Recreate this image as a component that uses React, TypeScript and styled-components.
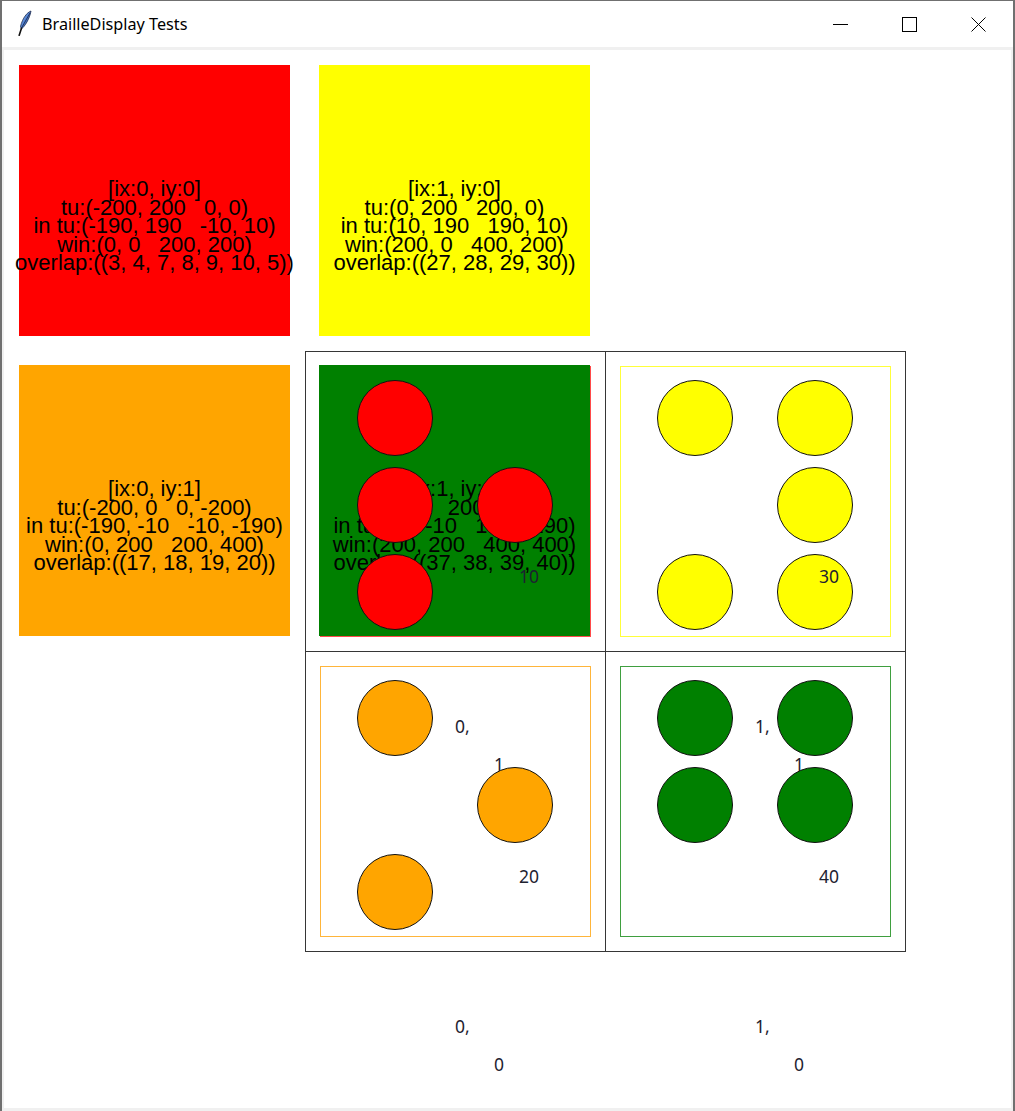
import React from "react";
import styled, { createGlobalStyle } from "styled-components";

const GlobalStyle = createGlobalStyle`
  html, body {
    margin: 0;
    padding: 0;
    background: #ffffff;
  }
  body {
    width: 1015px;
    height: 1111px;
    overflow: hidden;
  }
`;

type InfoPanel = {
  fill: string;
  lines: string[];
};

type BrailleCell = {
  frame: string;
  fill: string;
  dots: number[];
  coords?: [string, string];
  index: string;
  panel?: InfoPanel;
};

const redInfo: InfoPanel = {
  fill: "#ff0000",
  lines: [
    "[ix:0, iy:0]",
    "tu:(-200, 200   0, 0)",
    "in tu:(-190, 190   -10, 10)",
    "win:(0, 0   200, 200)",
    "overlap:((3, 4, 7, 8, 9, 10, 5))",
  ],
};

const yellowInfo: InfoPanel = {
  fill: "#ffff00",
  lines: [
    "[ix:1, iy:0]",
    "tu:(0, 200   200, 0)",
    "in tu:(10, 190   190, 10)",
    "win:(200, 0   400, 200)",
    "overlap:((27, 28, 29, 30))",
  ],
};

const orangeInfo: InfoPanel = {
  fill: "#ffa500",
  lines: [
    "[ix:0, iy:1]",
    "tu:(-200, 0   0, -200)",
    "in tu:(-190, -10   -10, -190)",
    "win:(0, 200   200, 400)",
    "overlap:((17, 18, 19, 20))",
  ],
};

const greenInfo: InfoPanel = {
  fill: "#008000",
  lines: [
    "[ix:1, iy:1]",
    "tu:(0, 0   200, -200)",
    "in tu:(10, -10   190, -190)",
    "win:(200, 200   400, 400)",
    "overlap:((37, 38, 39, 40))",
  ],
};

// dots are listed row by row: (1,4) (2,5) (3,6)
const cells: BrailleCell[] = [
  {
    frame: "#ff4a4a",
    fill: "#ff0000",
    dots: [1, 0, 1, 1, 1, 0],
    index: "10",
    panel: greenInfo,
  },
  {
    frame: "#ffff3a",
    fill: "#ffff00",
    dots: [1, 1, 0, 1, 1, 1],
    index: "30",
  },
  {
    frame: "#ffb53a",
    fill: "#ffa500",
    dots: [1, 0, 0, 1, 1, 0],
    coords: ["0,", "1"],
    index: "20",
  },
  {
    frame: "#3f9f3f",
    fill: "#008000",
    dots: [1, 1, 1, 1, 0, 0],
    coords: ["1,", "1"],
    index: "40",
  },
];

const strayCoords: [string, string][] = [
  ["0,", "0"],
  ["1,", "0"],
];

const Info: React.FC<{ info: InfoPanel; $overlay?: boolean }> = ({ info, $overlay }) => (
  <Panel $fill={info.fill} $overlay={$overlay}>
    <InfoText>
      {info.lines.map((line) => (
        <div key={line}>{line}</div>
      ))}
    </InfoText>
  </Panel>
);

const App: React.FC = () => {
  return (
    <>
      <GlobalStyle />
      <Window>
        <TitleBar>
          <AppIcon width="16" height="26" viewBox="0 0 16 26">
            <defs>
              <linearGradient id="feather" x1="0" y1="0" x2="1" y2="1">
                <stop offset="0" stopColor="#a9c8f2" />
                <stop offset="0.5" stopColor="#4d7fd0" />
                <stop offset="1" stopColor="#23438a" />
              </linearGradient>
            </defs>
            <path
              d="M15 1 C 11 2.5 6.5 8 4.5 16.5 L 5.5 19 C 9 16 13.5 9 15 1 Z"
              fill="url(#feather)"
              stroke="#1d2b4f"
              strokeWidth="0.8"
            />
            <path d="M14 3 L 5.2 18.6" stroke="#0d1633" strokeWidth="0.7" />
            <path
              d="M5.4 18.4 L 3.2 25.3"
              stroke="#111111"
              strokeWidth="1.6"
              strokeLinecap="round"
            />
          </AppIcon>
          <Title>BrailleDisplay Tests</Title>
          <Controls>
            <ControlButton>
              <svg width="15" height="15" viewBox="0 0 15 15">
                <path d="M0 7.5 H15" stroke="#000" strokeWidth="1" />
              </svg>
            </ControlButton>
            <ControlButton>
              <svg width="15" height="15" viewBox="0 0 15 15">
                <rect x="0.5" y="0.5" width="14" height="14" fill="none" stroke="#000" />
              </svg>
            </ControlButton>
            <ControlButton>
              <svg width="15" height="15" viewBox="0 0 15 15">
                <path d="M0.5 0.5 L14.5 14.5 M14.5 0.5 L0.5 14.5" stroke="#000" strokeWidth="1" />
              </svg>
            </ControlButton>
          </Controls>
        </TitleBar>
        <Client>
          <Canvas>
            <TopRow>
              <Info info={redInfo} />
              <Info info={yellowInfo} />
            </TopRow>

            <MiddleRow>
              <SideSlot>
                <Info info={orangeInfo} />
              </SideSlot>
              <Grid>
                {cells.map((cell) => (
                  <Cell key={cell.index}>
                    <Frame $color={cell.frame} />
                    {cell.panel && <Info info={cell.panel} $overlay />}
                    {cell.coords && (
                      <>
                        <CoordX>{cell.coords[0]}</CoordX>
                        <CoordY>{cell.coords[1]}</CoordY>
                      </>
                    )}
                    <DotGrid>
                      {cell.dots.map((on, i) => (
                        <Dot key={i} $fill={cell.fill} $on={on === 1} />
                      ))}
                    </DotGrid>
                    <IndexTag>{cell.index}</IndexTag>
                  </Cell>
                ))}
              </Grid>
            </MiddleRow>

            <StrayRow>
              {strayCoords.map(([x, y]) => (
                <StrayCell key={x}>
                  <CoordX>{x}</CoordX>
                  <CoordY>{y}</CoordY>
                </StrayCell>
              ))}
            </StrayRow>
          </Canvas>
        </Client>
      </Window>
    </>
  );
};

export default App;

const Window = styled.div`
  box-sizing: border-box;
  width: 1015px;
  height: 1111px;
  display: flex;
  flex-direction: column;
  background: #f0f0f0;
  border-style: solid;
  border-color: #707070;
  border-width: 1px 2px 0 2px;
`;

const TitleBar = styled.div`
  flex: none;
  height: 46px;
  display: flex;
  align-items: center;
  background: #ffffff;
`;

const AppIcon = styled.svg`
  align-self: flex-start;
  margin: 9px 10px 0 14px;
`;

const Title = styled.span`
  font-family: "Noto Sans", "Open Sans", sans-serif;
  font-size: 16.2px;
  color: #000000;
`;

const Controls = styled.div`
  margin-left: auto;
  display: flex;
  height: 100%;
`;

const ControlButton = styled.div`
  width: 69px;
  height: 100%;
  display: flex;
  align-items: center;
  justify-content: center;
`;

const Client = styled.div`
  flex: 1;
  padding: 3px 2px 3px 2px;
`;

const Canvas = styled.div`
  box-sizing: border-box;
  width: 1007px;
  height: 1058px;
  padding: 15px 0 0 15px;
  display: flex;
  flex-direction: column;
  background: #ffffff;
  overflow: hidden;
`;

const TopRow = styled.div`
  display: flex;
  gap: 29px;
`;

const MiddleRow = styled.div`
  display: flex;
  align-items: flex-start;
  gap: 15px;
  margin-top: 15px;
`;

const SideSlot = styled.div`
  padding-top: 14px;
`;

const Panel = styled.div<{ $fill: string; $overlay?: boolean }>`
  box-sizing: border-box;
  width: 271px;
  height: 271px;
  padding-top: 115px;
  display: flex;
  flex-direction: column;
  align-items: center;
  background: ${(p) => p.$fill};
  ${(p) =>
    p.$overlay &&
    `
    position: absolute;
    left: 13px;
    top: 13px;
  `}
`;

const InfoText = styled.div`
  font-family: "Liberation Sans", Arial, sans-serif;
  font-size: 22px;
  line-height: 18.6px;
  color: #000000;
  text-align: center;
  white-space: pre;
`;

const Grid = styled.div`
  display: grid;
  grid-template-columns: repeat(2, 299px);
  grid-template-rows: repeat(2, 299px);
  gap: 1px;
  padding: 1px;
  background: #363636;
`;

const Cell = styled.div`
  position: relative;
  box-sizing: border-box;
  padding: 28px 0 0 51px;
  background: #ffffff;
`;

const Frame = styled.div<{ $color: string }>`
  position: absolute;
  left: 14px;
  top: 14px;
  width: 271px;
  height: 271px;
  box-sizing: border-box;
  border: 1px solid ${(p) => p.$color};
`;

const DotGrid = styled.div`
  position: relative;
  display: grid;
  grid-template-columns: repeat(2, 76px);
  grid-auto-rows: 76px;
  column-gap: 44px;
  row-gap: 11px;
`;

const Dot = styled.div<{ $fill: string; $on: boolean }>`
  box-sizing: border-box;
  border-radius: 50%;
  border: 1px solid #111111;
  background: ${(p) => p.$fill};
  visibility: ${(p) => (p.$on ? "visible" : "hidden")};
`;

const Tag = styled.span`
  position: absolute;
  font-family: "Noto Sans", "Open Sans", sans-serif;
  font-size: 17.5px;
  line-height: 20px;
  color: #1e2230;
  white-space: pre;
`;

const CoordX = styled(Tag)`
  left: 149px;
  top: 64px;
`;

const CoordY = styled(Tag)`
  left: 188px;
  top: 102px;
`;

const IndexTag = styled(Tag)`
  left: 213px;
  top: 214px;
`;

const StrayRow = styled.div`
  display: flex;
  gap: 1px;
  margin-left: 287px;
`;

const StrayCell = styled.div`
  position: relative;
  width: 299px;
  height: 140px;
`;
